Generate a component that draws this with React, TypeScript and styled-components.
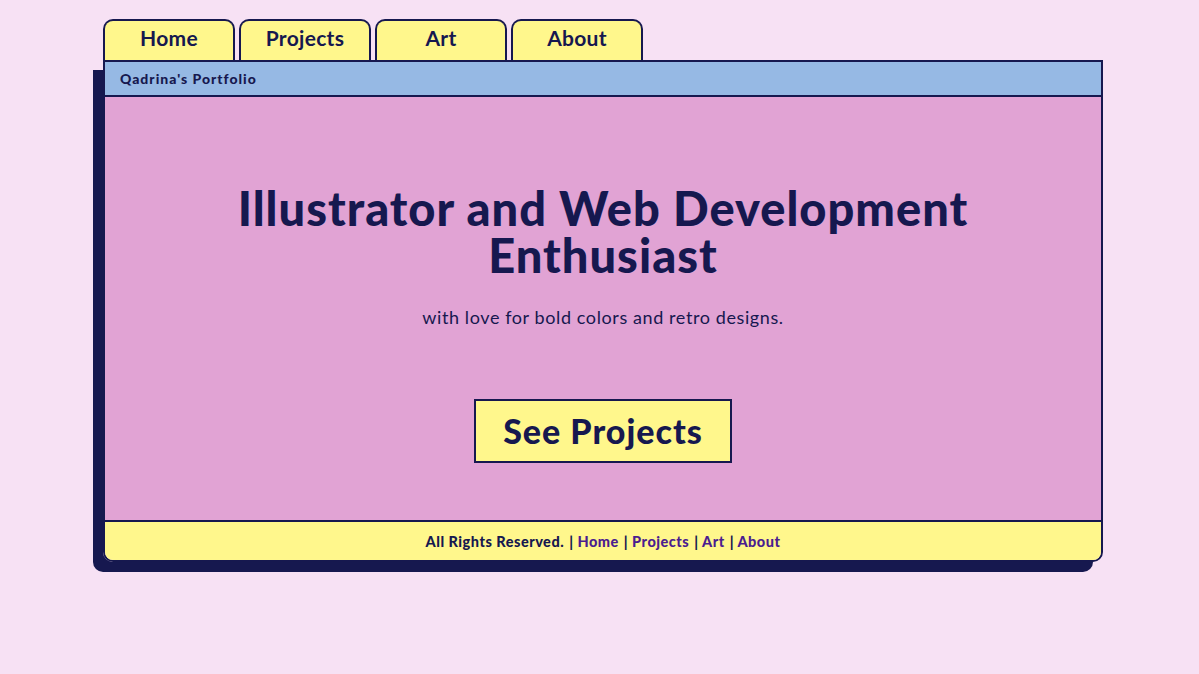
import styled, { createGlobalStyle } from "styled-components";

const NAVY = "#16184f";
const YELLOW = "#fff78c";
const BLUE = "#96b9e4";
const PINK = "#e1a3d4";
const LINK = "#4b1d8f";

const GlobalStyle = createGlobalStyle`
  body {
    margin: 0;
    background: #f7e1f4;
    font-family: "Lato", "Open Sans", sans-serif;
    color: ${NAVY};
  }
`;

const Page = styled.div`
  padding: 19px 0 60px 103px;
  width: 1000px;
`;

const Tabs = styled.nav`
  display: flex;
  gap: 4px;
`;

const Tab = styled.a`
  display: flex;
  align-items: center;
  justify-content: center;
  width: 128px;
  height: 33px;
  padding-bottom: 6px;
  box-sizing: content-box;
  background: ${YELLOW};
  border: 2px solid ${NAVY};
  border-bottom: none;
  border-radius: 10px 10px 0 0;
  font-size: 21px;
  font-weight: 700;
  letter-spacing: 0.3px;
  color: ${NAVY};
  text-decoration: none;
`;

const Window = styled.div`
  border: 2px solid ${NAVY};
  border-radius: 0 0 10px 10px;
  box-shadow: -10px 10px 0 ${NAVY};
  overflow: hidden;
  display: flex;
  flex-direction: column;
`;

const TitleBar = styled.header`
  height: 33px;
  background: ${BLUE};
  border-bottom: 2px solid ${NAVY};
  display: flex;
  align-items: center;
  padding-left: 15px;
  font-size: 14px;
  font-weight: 900;
  letter-spacing: 1px;
`;

const Hero = styled.main`
  height: 423px;
  background: ${PINK};
  display: flex;
  flex-direction: column;
  align-items: center;
  padding-top: 88px;
  box-sizing: border-box;
`;

const Heading = styled.h1`
  margin: 0;
  font-size: 47px;
  line-height: 47px;
  font-weight: 900;
  letter-spacing: 1px;
  text-align: center;
  max-width: 800px;
`;

const Subtitle = styled.p`
  margin: 28px 0 0;
  font-size: 18px;
  line-height: 21.6px;
  letter-spacing: 0.6px;
`;

const Button = styled.a`
  margin-top: 70px;
  width: 254px;
  height: 60px;
  display: flex;
  align-items: center;
  justify-content: center;
  background: ${YELLOW};
  border: 2px solid ${NAVY};
  font-size: 34px;
  font-weight: 900;
  letter-spacing: 1px;
  color: ${NAVY};
  text-decoration: none;
`;

const Footer = styled.footer`
  height: 38px;
  background: ${YELLOW};
  border-top: 2px solid ${NAVY};
  display: flex;
  align-items: center;
  justify-content: center;
  gap: 5px;
  font-size: 14.5px;
  font-weight: 900;
  letter-spacing: 0.5px;
`;

const FooterLink = styled.a`
  color: ${LINK};
  text-decoration: none;
`;

const tabs = ["Home", "Projects", "Art", "About"];

export default function App() {
  return (
    <>
      <GlobalStyle />
      <Page>
        <Tabs>
          {tabs.map((t) => (
            <Tab key={t} href="#">
              {t}
            </Tab>
          ))}
        </Tabs>
        <Window>
          <TitleBar>Qadrina's Portfolio</TitleBar>
          <Hero>
            <Heading>Illustrator and Web Development Enthusiast</Heading>
            <Subtitle>with love for bold colors and retro designs.</Subtitle>
            <Button href="#">See Projects</Button>
          </Hero>
          <Footer>
            <span>All Rights Reserved.</span>
            {tabs.map((t) => (
              <span key={t}>
                | <FooterLink href="#">{t}</FooterLink>
              </span>
            ))}
          </Footer>
        </Window>
      </Page>
    </>
  );
}
